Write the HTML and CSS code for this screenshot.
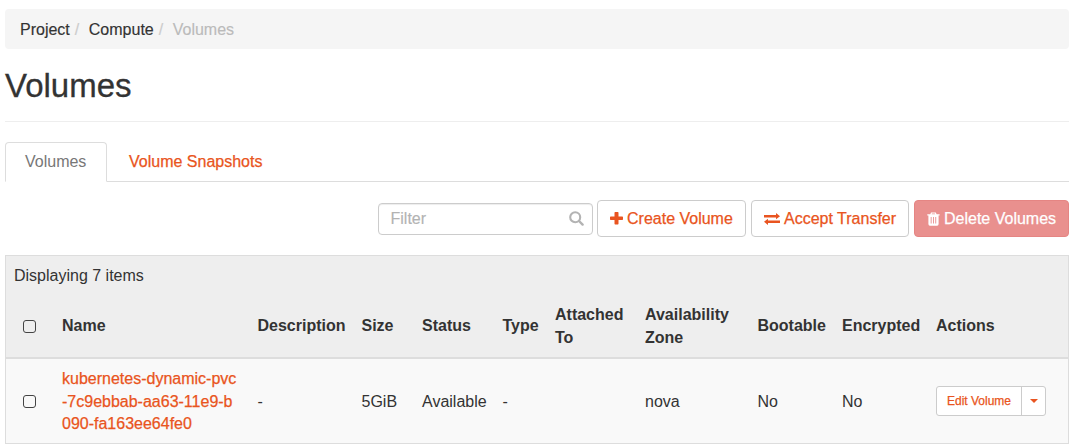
FILE: index.html
```html
<!DOCTYPE html>
<html lang="en">
<head>
<meta charset="utf-8">
<title>Volumes</title>
<link rel="stylesheet" href="styles.css">
</head>
<body>
<nav class="breadcrumb"><a>Project</a><span class="sep">/</span><a>Compute</a><span class="sep">/</span><span class="current">Volumes</span></nav>
<h1 class="page-title">Volumes</h1>
<div class="tabs"><a class="tab active">Volumes</a><a class="tab">Volume Snapshots</a></div>
<div class="toolbar">
  <div class="filter"><span>Filter</span>
    <svg class="search-icon" width="15" height="15" viewBox="0 0 15 15"><circle cx="6.2" cy="6.2" r="5" fill="none" stroke="currentColor" stroke-width="2.100"/><path d="M10 10l3.600 3.600" stroke="currentColor" stroke-width="2.400" stroke-linecap="round"/></svg>
  </div>
  <a class="btn create"><svg width="13" height="13" viewBox="0 0 13 13"><path d="M5.200 0h2.600q.7 0 .7.700V4.500h3.800q.7 0 .7.700v2.100q0 .7-.7.700H8.500v3.800q0 .7-.7.700H5.200q-.7 0-.7-.7V8H.7Q0 8 0 7.300V5.200q0-.7.700-.7h3.800V.7q0-.7.700-.7z" fill="currentColor"/></svg><span>Create Volume</span></a>
  <a class="btn accept"><svg width="16" height="12" viewBox="0 0 16 12"><path d="M0 2h12V0l4 3.200L12 6.300V4.400H0zM16 7.600H4V5.700L0 8.800 4 12V10h12z" fill="currentColor"/></svg><span>Accept Transfer</span></a>
  <a class="btn danger"><svg width="13" height="14" viewBox="0 0 13 14"><path d="M.3 2.300h3L4 .5h4.800l.8 1.800h3v1.200h-1V12q0 1.700-1.500 1.700H2.900Q1.400 13.700 1.400 12V3.500H.3zM4.600 2.300h3.600l-.4-.9H5zM3.700 5v6.500h.9V5zM6 5v6.500h.9V5zM8.300 5v6.500h.9V5z" fill="currentColor" fill-rule="evenodd"/></svg><span>Delete Volumes</span></a>
</div>
<table class="volumes">
  <colgroup><col class="c-check"><col class="c-name"><col class="c-desc"><col class="c-size"><col class="c-status"><col class="c-type"><col class="c-attached"><col class="c-zone"><col class="c-boot"><col class="c-enc"><col class="c-actions"></colgroup>
  <thead>
    <tr class="summary"><td colspan="11">Displaying 7 items</td></tr>
    <tr class="heads"><th class="check"><span class="box"></span></th><th>Name</th><th>Description</th><th>Size</th><th>Status</th><th>Type</th><th>Attached To</th><th>Availability Zone</th><th>Bootable</th><th>Encrypted</th><th>Actions</th></tr>
  </thead>
  <tbody>
    <tr><td class="check"><span class="box"></span></td><td><a class="link">kubernetes-dynamic-pvc<br>-7c9ebbab-aa63-11e9-b<br>090-fa163ee64fe0</a></td><td>-</td><td>5GiB</td><td>Available</td><td>-</td><td></td><td>nova</td><td>No</td><td>No</td>
    <td class="actions"><div class="split"><a class="edit">Edit Volume</a><a class="toggle"><span class="caret"></span></a></div></td></tr>
  </tbody>
</table>
</body>
</html>
```
FILE: styles.css
```css
* { box-sizing: border-box; }
body {
  margin: 0;
  padding: 9px 7px 0 5px;
  height: 444px;
  overflow: hidden;
  background: #fff;
  color: #333;
  font: 16px/22.6px "Liberation Sans", Arial, sans-serif;
}
.breadcrumb {
  display: flex;
  height: 40px;
  padding: 0 15px;
  line-height: 41px;
  background: #f5f5f5;
  border-radius: 4px;
  -webkit-text-stroke: .15px currentColor;
}
.breadcrumb .sep { width: 19px; padding-left: 5px; color: #ccc; }
.breadcrumb .current { color: #bbb; }
.page-title {
  margin: 0 0 20px;
  height: 73px;
  padding-top: 17px;
  border-bottom: 1px solid #eee;
  font-size: 33px;
  font-weight: 400;
  line-height: 40px;
  -webkit-text-stroke: .3px currentColor;
}
.tabs { display: flex; height: 40px; border-bottom: 1px solid #ddd; }
.tab {
  height: 40px;
  padding: 0 20px 0 21px;
  border: 1px solid transparent;
  line-height: 38px;
  color: #e95420;
}
.tab.active {
  width: 102px;
  padding: 0 19px;
  background: #fff;
  border-color: #ddd #ddd #fff;
  border-radius: 4px 4px 0 0;
  color: #777;
}
.tab:not(.active), .btn, .link, .edit { -webkit-text-stroke: .25px currentColor; }
.toolbar { display: flex; align-items: center; justify-content: flex-end; margin-top: 18px; height: 37px; }
.filter {
  display: flex;
  justify-content: space-between;
  align-items: center;
  width: 215px;
  height: 32px;
  margin-right: 4px;
  padding: 0 8px 0 11.5px;
  border: 1px solid #ccc;
  border-radius: 4px;
  box-shadow: inset 0 1px 1px rgba(0, 0, 0, .075);
  color: #b3b3b3;
  -webkit-text-stroke: .15px currentColor;
}
.filter span, .btn span { padding-top: 1.500px; }
.btn {
  display: flex;
  align-items: center;
  gap: 4px;
  height: 37px;
  padding: 0 12px;
  border: 1px solid #ccc;
  border-radius: 4px;
  color: #e95420;
  white-space: nowrap;
}
.btn svg { flex: none; }
.create { width: 149px; margin-right: 5px; }
.accept { width: 158px; margin-right: 5px; }
.danger { width: 155px; padding-right: 0; background: #e9908e; border-color: #e58583; color: #fff; }
.volumes {
  width: 1064px;
  margin-top: 18px;
  border: 1px solid #ddd;
  border-spacing: 0;
  border-collapse: separate;
  table-layout: fixed;
  background: #f9f9f9;
}
.volumes th, .volumes td { padding: 0 8px; text-align: left; vertical-align: middle; }
.volumes thead { background: #eee; }
.volumes .summary td { height: 39px; padding-top: 2px; }
.volumes .heads th { height: 64px; padding-top: 1px; border-bottom: 2px solid #ddd; }
.volumes tbody td { height: 84px; padding-top: 2px; }
.c-check { width: 48px; }
.c-name { width: 195.5px; }
.c-desc { width: 104px; }
.c-size { width: 60.5px; }
.c-status { width: 80.5px; }
.c-type { width: 52.5px; }
.c-attached { width: 90px; }
.c-zone { width: 112.5px; }
.c-boot { width: 84.5px; }
.c-enc { width: 94px; }
.volumes .check { padding-right: 9px; text-align: center; line-height: 0; }
.volumes tbody .check, .volumes tbody .actions { padding-top: 0; }
.box {
  display: inline-block;
  width: 13px;
  height: 13px;
  border: 1px solid #444;
  border-radius: 3px;
  background: transparent;
}
.link { color: #e95420; white-space: nowrap; }
.split {
  display: flex;
  width: 110px;
  height: 30px;
  border: 1px solid #ccc;
  border-radius: 3px;
  background: #fff;
  color: #e95420;
  font-size: 12px;
  line-height: 28px;
}
.edit { width: 85px; padding-left: 10px; border-right: 1px solid #ccc; }
.toggle { display: flex; flex: 1; align-items: center; justify-content: center; }
.caret { border: 4px solid transparent; border-top-color: #e95420; border-bottom: 0; }
```
